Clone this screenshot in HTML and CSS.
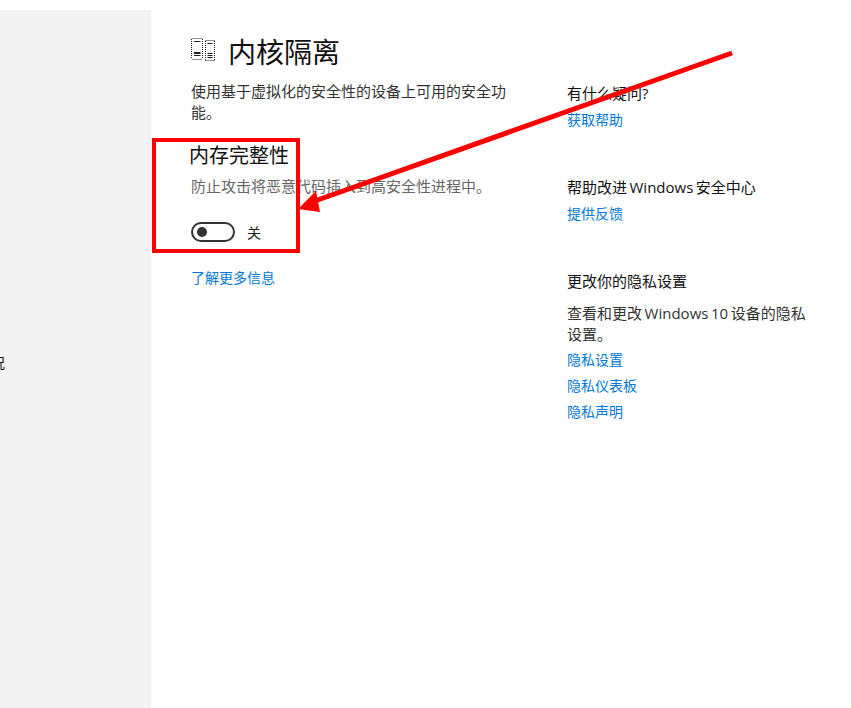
FILE: index.html
```html
<!DOCTYPE html>
<html lang="zh-CN">
<head>
<meta charset="utf-8">
<title>内核隔离</title>
<link rel="stylesheet" href="styles.css">
</head>
<body>
<div class="page">
  <aside class="sidebar">
    <div class="nav-item"><span>设备性能和运行状况</span></div>
  </aside>
  <main class="main">
    <section class="content">
      <h1 class="title">
        <svg class="title-icon" width="24" height="24" viewBox="0 0 24 24" fill="none" stroke="#222" stroke-width="1">
          <path d="M1.5 .5h10M1.5 21.5h10M.5 1v20M11.5 1v20" stroke-dasharray="1 1"/>
          <path d="M14.5 2.5h9M14.5 22.5h9M14.5 3v19M23.5 3v19" stroke-dasharray="1 1"/>
          <path d="M3 3.5h6.5M3 14.5h6.5M3 15.5h6.5M3 17.5h6.5M16.5 5.5h5M16.5 15.5h5M16.5 17.5h5M16.5 19.5h5"/>
        </svg>
        <span>内核隔离</span>
      </h1>
      <p class="desc">使用基于虚拟化的安全性的设备上可用的安全功能。</p>
      <h2 class="sub">内存完整性</h2>
      <p class="note">防止攻击将恶意代码插入到高安全性进程中。</p>
      <div class="toggle-row">
        <span class="toggle"><span class="knob"></span></span>
        <span class="toggle-label">关</span>
      </div>
      <a class="link more" href="#">了解更多信息</a>
    </section>
    <section class="side">
      <div class="block first">
        <h3 class="side-h">有什么疑问?</h3>
        <a class="link" href="#">获取帮助</a>
      </div>
      <div class="block second">
        <h3 class="side-h">帮助改进 Windows 安全中心</h3>
        <a class="link" href="#">提供反馈</a>
      </div>
      <div class="block third">
        <h3 class="side-h">更改你的隐私设置</h3>
        <p class="side-p">查看和更改 Windows 10 设备的隐私设置。</p>
        <a class="link" href="#">隐私设置</a>
        <a class="link" href="#">隐私仪表板</a>
        <a class="link" href="#">隐私声明</a>
      </div>
    </section>
  </main>
</div>
<div class="red-box"></div>
<svg class="arrow" width="851" height="708" viewBox="0 0 851 708">
  <line x1="732" y1="53" x2="312" y2="202" stroke="#fe0000" stroke-width="5"/>
  <polygon points="298,209 316,191 320,212" fill="#fe0000"/>
</svg>
</body>
</html>
```

FILE: styles.css
```css
* { box-sizing: border-box; }
html, body { margin: 0; padding: 0; height: 100%; background: #fff; overflow: hidden; }
body {
  font-family: "Open Sans", "Noto Sans CJK SC", sans-serif;
  font-size: 15px;
  color: #333;
}
.page { display: flex; height: 708px; padding-top: 10px; }
.sidebar {
  width: 151px;
  flex: none;
  background: #f3f3f3;
  padding-top: 343px;
  overflow: hidden;
}
.nav-item {
  width: 5px;
  height: 20px;
  display: flex;
  justify-content: flex-end;
  white-space: nowrap;
  color: #111;
  font-size: 14px;
  line-height: 20px;
}
.main { flex: 1; display: flex; padding-left: 40px; }
.content { width: 376px; flex: none; }
.title {
  margin: 22px 0 0;
  display: flex;
  align-items: center;
  gap: 13px;
  font-size: 28px;
  font-weight: 400;
  color: #111;
  line-height: 40px;
  height: 40px;
}
.title-icon { flex: none; margin-top: -4px; }
.desc { margin: 9px 0 0; width: 320px; line-height: 21px; }
.sub { margin: 19px 0 0 -2px; font-size: 20px; font-weight: 400; color: #111; line-height: 28px; }
.note { margin: 6px 0 0; color: #666; line-height: 20px; }
.toggle-row { margin-top: 26px; display: flex; align-items: center; height: 20px; }
.toggle {
  width: 44px;
  height: 20px;
  border: 2px solid #333;
  border-radius: 10px;
  display: flex;
  align-items: center;
  padding-left: 4px;
}
.knob { width: 10px; height: 10px; background: #333; border-radius: 50%; }
.toggle-label { margin-left: 12px; font-size: 14px; color: #222; }
.link { display: block; color: #0078d7; font-size: 14px; text-decoration: none; line-height: 20px; }
.more { margin-top: 26px; }
.side { width: 250px; flex: none; }
.side-h { margin: 0; font-size: 15px; font-weight: 400; color: #111; line-height: 20px; word-spacing: -1.4px; }
.block.first { margin-top: 73px; }
.block.first .link { margin-top: 7px; }
.block.second { margin-top: 47px; }
.block.second .link { margin-top: 7px; }
.block.third { margin-top: 47px; }
.side-p { margin: 12px 0 0; line-height: 21px; word-spacing: -1.3px; }
.third .link { margin-top: 6px; }
.third .side-p + .link { margin-top: 5px; }
.red-box {
  position: absolute;
  left: 152px;
  top: 138px;
  width: 148px;
  height: 115px;
  border: 4px solid #fe0000;
}
.arrow { position: absolute; left: 0; top: 0; pointer-events: none; }
```
